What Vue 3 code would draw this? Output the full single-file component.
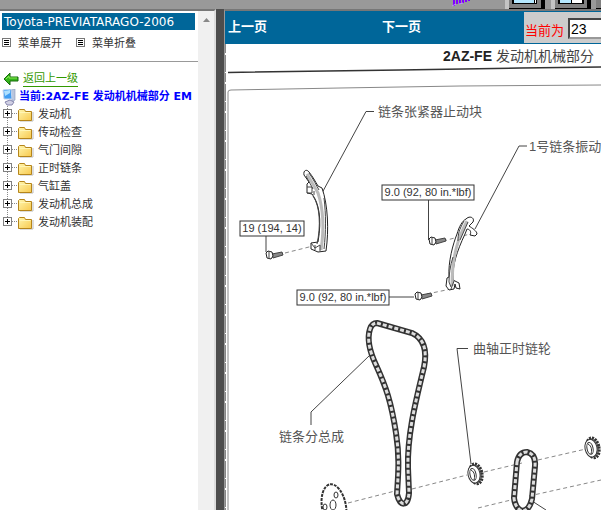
<template>
  <div class="page">
    <header class="topbar">
      <svg class="topbar-art" width="152" height="9" viewBox="449 0 152 9">
        <path d="M454 0v6M457 0v4M460 0v4M463 0v3M466 0v2M469 0v1" stroke="#8000ff" stroke-width="2" />
        <path d="M452 6l4-2M459 4l4-1" stroke="#c090ff" />
        <path d="M505 0h4v9h-4zM551 0h4v9h-4z" fill="#c4c4c4" />
        <path d="M509 0h32v9h-32zM555 0h32v9h-32zM596 0h5v9h-5z" fill="#808080" />
        <path d="M541 0h4v9h-36v-1h32zM587 0h4v9h-36v-1h32zM596 8h5v1h-5z" fill="#000" />
        <path d="M512 0h25v4h-25zM558 0h26v4h-26z" fill="#000" />
        <path d="M514 0h20v3h-20zM560 0h11v3h-11z" fill="#b5e8ff" />
        <path d="M535 0h1v3h-1zM572 0h10v3h-10z" fill="#fff" />
      </svg>
    </header>

    <div class="frames">
      <aside class="sidebar">
        <div class="tree-pane">
          <div class="manual-title">Toyota-PREVIATARAGO-2006</div>
          <div class="menu-actions">
            <button v-for="action in actions" :key="action" type="button">
              <svg width="9" height="9" viewBox="0 0 9 9">
                <rect x=".5" y=".5" width="8" height="8" fill="#fff" stroke="#777" />
                <path d="M2 2.5h5M2 4.5h5M2 6.5h5" stroke="#000" />
              </svg>
              {{ action }}
            </button>
          </div>
          <nav class="tree">
            <a class="back" href="#">
              <svg width="16" height="14" viewBox="0 0 16 14">
                <path d="M1 7l6-6v4h8v4H7v4z" fill="#35b51c" stroke="#176b0a" />
                <path d="M3 7l3-3v2h8" fill="none" stroke="#8bea55" />
              </svg>
              <span>返回上一级</span>
            </a>
            <div class="current">
              <svg width="15" height="17" viewBox="0 0 15 17">
                <path d="M9 1l4-1v11l-3 2z" fill="#b9c6de" stroke="#8796b5" stroke-width=".6" />
                <path d="M1 1l8-1 1 10-8 0z" fill="#3f9df2" stroke="#c3d4ee" />
                <path d="M2 2l6-1v3L3 7z" fill="#aee0ff" />
                <path d="M3 13l5-2 4 2-2 3H5z" fill="#d0d0e4" stroke="#8585ad" />
              </svg>
              <strong>当前:2AZ-FE 发动机机械部分 EM</strong>
            </div>
            <ul>
              <li v-for="(item, index) in chapters" :key="item">
                <svg width="34" height="18" viewBox="0 0 34 18">
                  <path :d="index === chapters.length - 1 ? 'M7.5 0v9' : 'M7.5 0v18'" stroke="#888" stroke-dasharray="1 1" />
                  <path d="M12 7.5h6" stroke="#888" stroke-dasharray="1 1" />
                  <rect x="3.500" y="3.500" width="8" height="8" fill="#fff" stroke="#808080" />
                  <path d="M5 7.500h5M7.500 5v5" stroke="#000" />
                  <path d="M20 15h13V6" fill="none" stroke="#bbb" />
                  <path d="M18.500 4.500l1-1h5l1 2h6v9h-13z" fill="url(#folder)" stroke="#b5851b" />
                  <path d="M19.500 6.500h11" stroke="#fff5b5" />
                  <defs>
                    <linearGradient id="folder" x2="1" y2="1">
                      <stop stop-color="#fff6ae" />
                      <stop offset="1" stop-color="#f8c94e" />
                    </linearGradient>
                  </defs>
                </svg>
                <a href="#">{{ item }}</a>
              </li>
            </ul>
          </nav>
        </div>
        <div class="scrollbar">
          <svg width="7" height="4" viewBox="0 0 7 4"><path d="M0 4l3.500-4L7 4z" fill="#888" /></svg>
        </div>
      </aside>
      <div class="splitter"></div>

      <main class="viewer">
        <div class="pager">
          <a href="#">上一页</a>
          <a href="#">下一页</a>
          <div class="page-field">
            <label for="page-number">当前为</label>
            <input id="page-number" v-model="pageNumber" type="text" />
          </div>
        </div>
        <div class="sheet">
          <svg class="diagram" width="376" height="466" viewBox="225 44 376 466">
            <path d="M225.500 44v466" stroke="#888" stroke-dasharray="9 2 17 1" />
            <text class="heading" x="443" y="61"><tspan class="heading-code">2AZ-FE</tspan> 发动机机械部分</text>
            <path d="M228 72.500L400 70L520 68L601 67" fill="none" stroke="#333" stroke-width="1.500" />
            <path d="M228 510V92q0-2 3-2L340 88L460 86L601 85" fill="none" stroke="#888" />

            <g class="line">
              <path d="M374 111.500h-8L322 193" />
              <path d="M527 146h-8L475 229" />
              <path d="M428.500 200v40M389 297h25M266 236v16" />
              <path d="M370 355L311 412v13" />
              <path d="M468 348.500h-11L471 464" />
              <path d="M532 501l14 9" />
            </g>
            <g class="axis">
              <path d="M285 253L313 246M443 241L474 233M427 294L451 289" />
              <path d="M348 503L395 491M412 489L467 475M484 472L522 463M538 460L586 449M478 508L511 500M529 496L601 480" />
            </g>

            <g class="callout">
              <rect v-for="box in torques" :key="box.y" :x="box.x" :y="box.y" :width="box.width" height="15" />
              <text v-for="box in torques" :key="'t' + box.y" :x="box.x + box.width / 2" :y="box.y + 11">{{ box.text }}</text>
            </g>
            <text v-for="label in labels" :key="label.text" class="label" :x="label.x" :y="label.y">{{ label.text }}</text>

            <g class="part">
              <path class="body" d="M304 175c-1-5 3-6 5-3c4 5 6 9 9 14l4 2c6 17 7 42 4 63l-8 1-7-3 0-6 7-1c4-23 1-39-6-48l-5-1v-9l2-2z" />
              <path class="shade" d="M307 174c5 9 8 13 11 19 6 18 6 37 3 57" />
              <path d="M309 173c5 7 7 12 10 17M306 176c3 6 5 9 7 13M313 196c7 10 8 30 4 48M324 198c2 16 2 34 0 51" />
              <path d="M307 187h5v6h-5M314 191v4M311 243l4 5 5-3v6M315 245v5" />

              <path class="body" d="M466 219c4-4 9-1 7 3l-4 4c3 2 8 5 8 8l-2 2-5-1c2-4-1-6-3-6l-2 5c-8 17-13 32-12 46l6 3 1 6-4-1-1-4-1 5-5 1-3-4 1-8 2-1c-1-15 4-33 8-43 2-7 5-13 9-15z" />
              <path class="shade" d="M467 221c-9 17-15 35-15 65" />
              <path d="M464 221c-5 9-6 13-6 20M468 222c-3 6-5 12-8 18M453 257c-3 9-4 18-4 25M449 282l2 5M454 281l-3 8" />

              <g v-for="bolt in bolts" :key="bolt.x" :transform="`translate(${bolt.x} ${bolt.y})`">
                <path class="bolt" d="M3-1l10-2 1 3-10 3z" />
                <path class="body" d="M-3-2l2-2 4 1 1 4-2 3-4-1z" />
                <path d="M0-4v8" />
              </g>
            </g>

            <g class="chain">
              <path v-for="(shape, index) in chains" :key="index" class="chain-edge" :d="shape" />
              <path v-for="(shape, index) in chains" :key="'l' + index" class="chain-links" :d="shape" />
            </g>

            <g v-for="gear in gears" :key="gear.x" class="gear" :transform="`translate(${gear.x} ${gear.y})`">
              <ellipse class="gear-teeth" cx="1" rx="6" ry="10" transform="rotate(-12)" />
              <ellipse cx="-1" rx="6" ry="9" transform="rotate(-12)" />
              <ellipse cx="-2" rx="3" ry="6" transform="rotate(-12)" />
              <path d="M-4-4c4 2 4 7 3 10" />
            </g>

            <g class="gear">
              <ellipse class="disc-teeth" cx="334" cy="507" rx="12" ry="23" transform="rotate(-10 334 507)" />
              <ellipse cx="333" cy="505" rx="3" ry="5" />
              <ellipse cx="336" cy="495" rx="2" ry="3" />
              <ellipse cx="325" cy="507" rx="2" ry="3" />
            </g>
          </svg>
        </div>
      </main>
    </div>
  </div>
</template>

<script setup>
import { ref } from 'vue'

const pageNumber = ref('23')

const actions = ['菜单展开', '菜单折叠']
const chapters = ['发动机', '传动检查', '气门间隙', '正时链条', '气缸盖', '发动机总成', '发动机装配']

const torques = [
  { x: 382, y: 185, width: 92, text: '9.0 (92, 80 in.*lbf)' },
  { x: 240, y: 221, width: 64, text: '19 (194, 14)' },
  { x: 297, y: 290, width: 92, text: '9.0 (92, 80 in.*lbf)' }
]

const labels = [
  { x: 378, y: 116, text: '链条张紧器止动块' },
  { x: 529, y: 151, text: '1号链条振动' },
  { x: 279, y: 441, text: '链条分总成' },
  { x: 473, y: 353, text: '曲轴正时链轮' }
]

const bolts = [
  { x: 269, y: 255 },
  { x: 432, y: 241 },
  { x: 418, y: 296 }
]

const gears = [
  { x: 475, y: 474 },
  { x: 592, y: 448 }
]

const chains = [
  'M377 323L412 333C425 339 427 352 424 367C416 400 407 435 408 468L409 493C408 507 400 507 397 494C398 476 400 459 396 433C391 401 386 387 376 365C369 350 367 338 370 329Q372 323 377 323Z',
  'M517 462Q519 452 527 452Q536 454 535 466L532 499Q529 511 522 511Q515 508 514 498Z'
]
</script>

<style>
body {
  margin: 0;
}
</style>

<style scoped>
.page {
  display: flex;
  flex-direction: column;
  height: 100vh;
  overflow: hidden;
  background: #999;
  color: #333;
  font-family: "DejaVu Sans", "Noto Sans CJK SC", sans-serif;
  font-size: 11px;
}

.page svg {
  display: block;
  flex: none;
}

a {
  color: inherit;
  text-decoration: none;
}

.topbar {
  height: 9px;
  flex: none;
}

.topbar-art {
  margin-left: auto;
}

.frames {
  display: flex;
  flex: 1;
  min-height: 0;
}

.sidebar {
  display: flex;
  flex: none;
  width: 214px;
  border-top: 2px solid #777;
  border-right: 2px solid #ddd;
  background: #fff;
}

.tree-pane {
  flex: 1;
  min-width: 0;
}

.manual-title {
  height: 17px;
  margin: 2px 3px 0 2px;
  padding-left: 2px;
  background: #069;
  color: #fff;
  font-family: "DejaVu Sans", sans-serif;
  font-size: 12px;
  line-height: 18px;
  white-space: nowrap;
}

.menu-actions {
  display: flex;
  gap: 14px;
  height: 31px;
  padding-left: 2px;
  border-bottom: 1px solid #999;
}

.menu-actions button {
  display: flex;
  align-items: center;
  gap: 7px;
  height: 24px;
  padding: 0;
  border: 0;
  background: none;
  color: inherit;
  font: inherit;
  cursor: pointer;
}

.tree {
  padding-top: 8px;
}

.back,
.current,
.tree li {
  display: flex;
  align-items: center;
  height: 18px;
  line-height: 18px;
  white-space: nowrap;
}

.back {
  gap: 4px;
  padding-left: 3px;
  color: #390;
}

.back span {
  line-height: 15px;
  border-bottom: 1px solid #390;
}

.current {
  gap: 2px;
  padding-left: 2px;
  color: #00f;
}

.tree ul {
  margin: 0;
  padding: 0;
  list-style: none;
}

.tree li {
  gap: 4px;
}

.tree li a {
  line-height: 20px;
}

.scrollbar {
  display: flex;
  justify-content: center;
  flex: none;
  width: 16px;
  padding-top: 7px;
  background: #f0f0f0;
}

.splitter {
  flex: none;
  width: 8px;
  background: #4d4d4d;
}

.viewer {
  display: flex;
  flex: 1;
  flex-direction: column;
  min-width: 0;
  border-top: 2px solid #777;
  border-left: 1px solid #999;
  background: #fff;
}

.pager {
  display: grid;
  grid-template-columns: 154px 145px 1fr;
  flex: none;
  height: 33px;
  background: #069;
  color: #fff;
  font-size: 13px;
  font-weight: bold;
  line-height: 32px;
}

.pager > a {
  padding-left: 3px;
}

.page-field {
  display: flex;
  gap: 4px;
  min-width: 0;
  margin: 1px 0;
  padding: 6px 0 0 1px;
  overflow: hidden;
  background: #ccc;
  color: #f00;
  font-weight: normal;
  line-height: 26px;
  white-space: nowrap;
}

.page-field input {
  box-sizing: border-box;
  flex: none;
  width: 60px;
  height: 21px;
  padding: 0 1px;
  border: 2px inset #999;
  background: #fff;
  color: #000;
  font-family: "Liberation Sans", sans-serif;
  font-size: 14px;
}

.sheet {
  flex: 1;
  min-height: 0;
  overflow: hidden;
}

.diagram {
  font-family: "Liberation Sans", "Noto Sans CJK SC", sans-serif;
}

.heading {
  fill: #444;
  font-size: 14px;
}

.heading-code {
  fill: #222;
  font-weight: bold;
}

.label {
  fill: #555;
  font-size: 13px;
}

.line path {
  fill: none;
  stroke: #444;
}

.axis path {
  fill: none;
  stroke: #888;
  stroke-dasharray: 4 3;
}

.callout rect {
  fill: #fff;
  stroke: #333;
}

.callout text {
  fill: #333;
  font-size: 11px;
  text-anchor: middle;
}

.part path {
  fill: none;
  stroke: #444;
  stroke-linejoin: round;
}

.part .body {
  fill: #fff;
  stroke: #222;
}

.part .shade {
  stroke: #bbb;
  stroke-width: 3;
}

.part .bolt {
  fill: #888;
}

.chain path {
  fill: none;
}

.chain-edge {
  stroke: #333;
  stroke-width: 6;
}

.chain-links {
  stroke: #ddd;
  stroke-width: 3;
  stroke-dasharray: 4 2;
}

.gear ellipse,
.gear path {
  fill: #fff;
  stroke: #333;
}

.gear .gear-teeth {
  fill: #999;
  stroke-width: 3;
  stroke-dasharray: 2 1;
}

.gear .disc-teeth {
  stroke-width: 2;
  stroke-dasharray: 3 1;
}
</style>
